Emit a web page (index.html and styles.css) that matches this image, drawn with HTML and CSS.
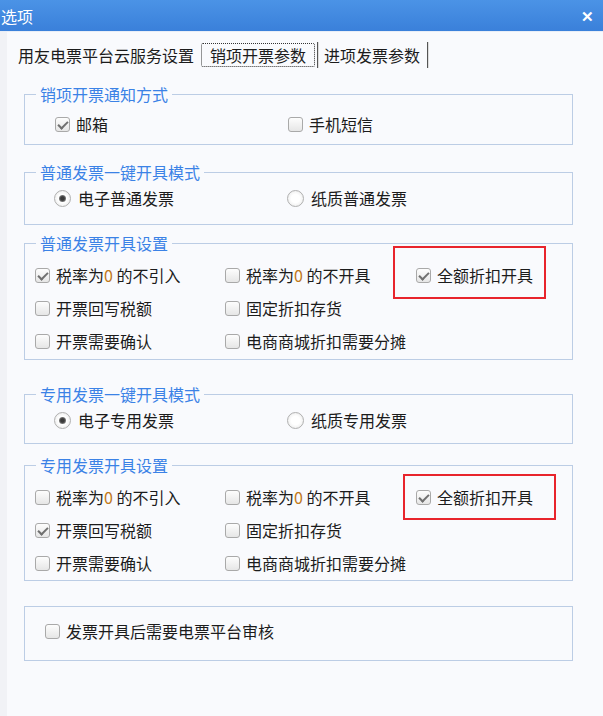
FILE: index.html
```html
<!DOCTYPE html>
<html lang="zh-CN">
<head>
    <meta charset="UTF-8">
    <meta name="viewport" content="width=device-width, initial-scale=1.0">
    <title>选项</title>
    <link rel="stylesheet" href="styles.css">
</head>
<body>
<div class="titlebar">
    <span class="title">选项</span>
    <span class="close">✕</span>
</div>
<div class="tabs">
    <span class="tab">用友电票平台云服务设置</span>
    <span class="tab active">销项开票参数</span>
    <span class="sep"></span>
    <span class="tab">进项发票参数</span>
    <span class="sep"></span>
</div>
<div class="panel">
    <fieldset class="group g1">
        <legend>销项开票通知方式</legend>
        <div class="row wide">
            <label class="opt"><span class="box checked"></span>邮箱</label>
            <label class="opt"><span class="box"></span>手机短信</label>
        </div>
    </fieldset>
    <fieldset class="group g2">
        <legend>普通发票一键开具模式</legend>
        <div class="row wide radios">
            <label class="opt"><span class="radio checked"></span>电子普通发票</label>
            <label class="opt"><span class="radio"></span>纸质普通发票</label>
        </div>
    </fieldset>
    <fieldset class="group g3">
        <legend>普通发票开具设置</legend>
        <div class="grid">
            <label class="opt"><span class="box checked"></span>税率为<span class="zero">0</span>&nbsp;的不引入</label>
            <label class="opt"><span class="box"></span>税率为<span class="zero">0</span>&nbsp;的不开具</label>
            <label class="opt marked"><span class="box checked"></span>全额折扣开具<span class="redbox r1"></span></label>
            <label class="opt"><span class="box"></span>开票回写税额</label>
            <label class="opt"><span class="box"></span>固定折扣存货</label>
            <span></span>
            <label class="opt"><span class="box"></span>开票需要确认</label>
            <label class="opt"><span class="box"></span>电商商城折扣需要分摊</label>
        </div>
    </fieldset>
    <fieldset class="group g4">
        <legend>专用发票一键开具模式</legend>
        <div class="row wide radios">
            <label class="opt"><span class="radio checked"></span>电子专用发票</label>
            <label class="opt"><span class="radio"></span>纸质专用发票</label>
        </div>
    </fieldset>
    <fieldset class="group g5">
        <legend>专用发票开具设置</legend>
        <div class="grid">
            <label class="opt"><span class="box"></span>税率为<span class="zero">0</span>&nbsp;的不引入</label>
            <label class="opt"><span class="box"></span>税率为<span class="zero">0</span>&nbsp;的不开具</label>
            <label class="opt marked"><span class="box checked"></span>全额折扣开具<span class="redbox r2"></span></label>
            <label class="opt"><span class="box checked"></span>开票回写税额</label>
            <label class="opt"><span class="box"></span>固定折扣存货</label>
            <span></span>
            <label class="opt"><span class="box"></span>开票需要确认</label>
            <label class="opt"><span class="box"></span>电商商城折扣需要分摊</label>
        </div>
    </fieldset>
    <fieldset class="group g6">
        <div class="row single">
            <label class="opt"><span class="box"></span>发票开具后需要电票平台审核</label>
        </div>
    </fieldset>
</div>
</body>
</html>
```
FILE: styles.css
```css
body{
    margin: 0;
    height: 716px;
    background: linear-gradient(to right, #f1f2f6 0, #f1f2f6 7px, #f9fafd 7px);
    font-family: "Noto Sans CJK SC", "Microsoft YaHei", sans-serif;
    font-size: 16px;
    line-height: 20px;
    color: #1c1c1c;
    overflow: hidden;
}
.titlebar{
    height: 31px;
    display: flex;
    align-items: center;
    justify-content: space-between;
    padding: 0 9px 0 1px;
    background: linear-gradient(#4b93e6, #3a80da);
    border-bottom: 1px solid #e9eef7;
    color: #fff;
}
.title{
    font-size: 16px;
}
.close{
    font-size: 15px;
    font-weight: bold;
}
.tabs{
    display: flex;
    align-items: center;
    height: 26px;
    margin-top: 10px;
    padding-left: 18px;
}
.tab{
    line-height: 22px;
}
.tab.active{
    margin-left: 7px;
    padding: 0 8px;
    border: 1px dotted #333;
    border-radius: 2px;
}
.sep{
    width: 1px;
    height: 26px;
    margin: 0 5px 0 2px;
    background: #555;
    border-right: 1px solid #ddd;
}
.tabs .sep:last-child{
    margin-left: 7px;
}
.panel{
    padding-left: 24px;
}
.group{
    box-sizing: border-box;
    width: 549px;
    margin: 0;
    padding-left: 0;
    padding-right: 0;
    border: 1px solid #bccde5;
    min-width: 0;
}
.group legend{
    margin-left: 11px;
    padding: 0 4px;
    color: #3b82e6;
    line-height: 20px;
}
.g1{ margin-top: 16px; padding-top: 10px; padding-bottom: 10px; }
.g2{ margin-top: 17px; padding-top: 6px; padding-bottom: 16px; }
.g3{ margin-top: 8px; padding-top: 12px; padding-bottom: 8px; }
.g4{ margin-top: 24px; padding-top: 6px; padding-bottom: 13px; }
.g5{ margin-top: 11px; padding-top: 12px; padding-bottom: 7px; }
.g6{ margin-top: 25px; padding-top: 14px; padding-bottom: 19px; }
.row{
    display: flex;
}
.row.wide{
    margin-left: 30px;
}
.row.radios{
    margin-left: 29px;
}
.row.single{
    margin-left: 20px;
}
.row.wide .opt{
    width: 233px;
}
.grid{
    display: grid;
    grid-template-columns: 190px 191px auto;
    row-gap: 13px;
    margin-left: 10px;
}
.opt{
    position: relative;
    display: flex;
    align-items: center;
    white-space: nowrap;
}
.zero{
    color: #c0781a;
}
.box{
    position: relative;
    box-sizing: border-box;
    width: 15px;
    height: 15px;
    margin-right: 6px;
    border: 1px solid #a9a9a9;
    border-radius: 3px;
    background: linear-gradient(#fdfdfd, #e6e6e6);
}
.box.checked::after{
    content: "";
    position: absolute;
    left: 4px;
    top: 1px;
    width: 4px;
    height: 8px;
    border-right: 2px solid #707070;
    border-bottom: 2px solid #707070;
    transform: rotate(45deg);
}
.radio{
    position: relative;
    box-sizing: border-box;
    width: 17px;
    height: 17px;
    margin-right: 7px;
    border: 1px solid #b0b0b0;
    border-radius: 50%;
    background: radial-gradient(circle, #ffffff 40%, #e4e4e4);
}
.radio.checked::after{
    content: "";
    position: absolute;
    left: 4px;
    top: 4px;
    width: 7px;
    height: 7px;
    border-radius: 50%;
    background: radial-gradient(circle, #3a3a3a 35%, #8a8a8a 75%, #c8c8c8);
}
.redbox{
    position: absolute;
    box-sizing: border-box;
    border: 2px solid #e8242c;
    pointer-events: none;
}
.r1{
    left: -23px;
    top: -19px;
    width: 153px;
    height: 53px;
}
.r2{
    left: -13px;
    top: -13px;
    width: 153px;
    height: 46px;
}
```
